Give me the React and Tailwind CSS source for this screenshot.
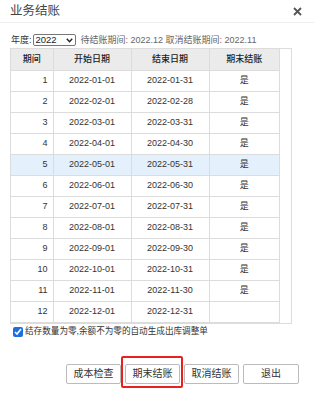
import React from "react";

const rows = [
    { n: 1, start: "2022-01-01", end: "2022-01-31", closed: true },
    { n: 2, start: "2022-02-01", end: "2022-02-28", closed: true },
    { n: 3, start: "2022-03-01", end: "2022-03-31", closed: true },
    { n: 4, start: "2022-04-01", end: "2022-04-30", closed: true },
    { n: 5, start: "2022-05-01", end: "2022-05-31", closed: true },
    { n: 6, start: "2022-06-01", end: "2022-06-30", closed: true },
    { n: 7, start: "2022-07-01", end: "2022-07-31", closed: true },
    { n: 8, start: "2022-08-01", end: "2022-08-31", closed: true },
    { n: 9, start: "2022-09-01", end: "2022-09-30", closed: true },
    { n: 10, start: "2022-10-01", end: "2022-10-31", closed: true },
    { n: 11, start: "2022-11-01", end: "2022-11-30", closed: true },
    { n: 12, start: "2022-12-01", end: "2022-12-31", closed: false },
];

const font = { fontFamily: '"Liberation Sans", "Noto Sans CJK SC", sans-serif' };

export default function App() {
    return (
        <div
            className="w-[314px] h-[396px] bg-white text-[#333] font-['Liberation_Sans','Noto_Sans_CJK_SC',sans-serif]"
        >
            {/* title bar */}
            <div className="h-[23px] flex items-center justify-between pl-[10px] pr-[12px] border-b border-[#eeeeee]">
                <span className="text-[12.5px] text-[#444] leading-none">业务结账</span>
                <svg width="9" height="9" viewBox="0 0 9 9" className="text-[#555]">
                    <path d="M1 1 L8 8 M8 1 L1 8" stroke="currentColor" strokeWidth="1.8" />
                </svg>
            </div>

            {/* year row */}
            <div className="flex items-center h-[12px] mt-[11px] pl-[11px] text-[9px] leading-none">
                <span>年度:</span>
                <div className="ml-[1px] w-[43px] h-[12px] border border-[#777] rounded-[2px] flex items-center justify-between px-[2px] text-[9.5px] text-[#222]">
                    <span>2022</span>
                    <svg width="7" height="5" viewBox="0 0 7 5">
                        <path d="M0.8 0.8 L3.5 3.8 L6.2 0.8" fill="none" stroke="#222" strokeWidth="1.4" />
                    </svg>
                </div>
                <span className="ml-[5px] text-[#666]">待结账期间: 2022.12 取消结账期间: 2022.11</span>
            </div>

            {/* table */}
            <div className="mt-[2px] ml-[10px] w-[282px] border border-[#dcdcdc] flex">
                <table className="w-[269px] border-collapse text-[9px] table-fixed" style={font}>
                    <colgroup>
                        <col className="w-[42px]" />
                        <col className="w-[78px]" />
                        <col className="w-[78px]" />
                        <col />
                    </colgroup>
                    <thead>
                        <tr className="h-[21px] bg-[#ebebeb] text-[#222]">
                            <th className="font-medium border-r border-b border-[#dcdcdc]">期间</th>
                            <th className="font-medium border-r border-b border-[#dcdcdc]">开始日期</th>
                            <th className="font-medium border-r border-b border-[#dcdcdc]">结束日期</th>
                            <th className="font-medium border-r border-b border-[#dcdcdc]">期末结账</th>
                        </tr>
                    </thead>
                    <tbody>
                        {rows.map((r) => (
                            <tr
                                key={r.n}
                                className={`h-[21px] ${r.n === 5 ? "bg-[#e5f0fd]" : "bg-white"}`}
                            >
                                <td className="text-right pr-[5px] border-r border-b border-[#dcdcdc]">{r.n}</td>
                                <td className="text-center border-r border-b border-[#dcdcdc]">{r.start}</td>
                                <td className="text-center border-r border-b border-[#dcdcdc]">{r.end}</td>
                                <td className="text-center border-r border-b border-[#dcdcdc]">
                                    {r.closed ? "是" : ""}
                                </td>
                            </tr>
                        ))}
                    </tbody>
                </table>
                <div className="flex-1" />
            </div>

            {/* option */}
            <label className="flex items-center mt-[2px] pl-[13px] h-[12px] text-[8.6px] leading-none">
                <input
                    type="checkbox"
                    checked
                    readOnly
                    className="w-[10px] h-[10px] m-0 accent-[#1c6fe0]"
                />
                <span className="ml-[2px]">结存数量为零,余额不为零的自动生成出库调整单</span>
            </label>

            {/* buttons */}
            <div className="flex justify-end gap-[4px] pr-[15px] mt-[26px] text-[10px]">
                <button className="w-[55px] h-[20px] border border-[#bbbbbb] rounded-[2px] bg-white">成本检查</button>
                <div className="relative">
                    <button className="w-[55px] h-[20px] border border-[#bbbbbb] rounded-[2px] bg-white">期末结账</button>
                    <div className="absolute left-[-4px] right-[-3px] top-[-8px] bottom-[-4px] border-2 border-[#e8211f] rounded-[2px] pointer-events-none" />
                </div>
                <button className="w-[55px] h-[20px] border border-[#bbbbbb] rounded-[2px] bg-white">取消结账</button>
                <button className="w-[56px] h-[20px] border border-[#bbbbbb] rounded-[2px] bg-white">退出</button>
            </div>
        </div>
    );
}
